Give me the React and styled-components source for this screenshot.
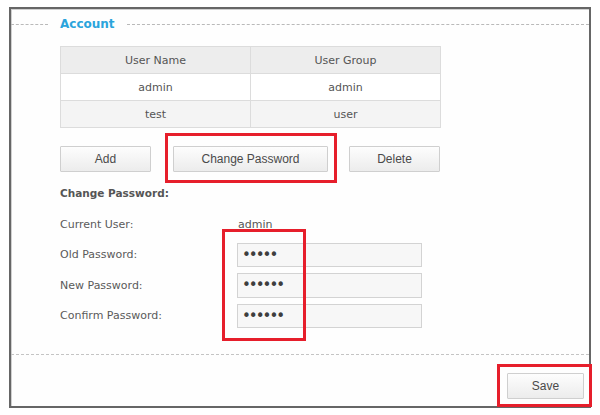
import React from "react";
import styled, { createGlobalStyle } from "styled-components";

const GlobalStyle = createGlobalStyle`
  html, body {
    margin: 0;
    padding: 0;
    background: #ffffff;
  }
  body {
    font-family: "DejaVu Sans", Verdana, sans-serif;
    color: #555555;
  }
`;

const Frame = styled.div`
  position: relative;
  box-sizing: border-box;
  width: 582px;
  height: 401px;
  margin: 7px 0 0 9px;
  border: 2px solid #666666;
  box-shadow: inset 1px 1px 0 #d0d0d0;
  background: #fefefe;
  display: flex;
  flex-direction: column;
`;

const Legend = styled.div`
  display: flex;
  align-items: center;
  height: 30px;
`;

const DashLine = styled.div`
  height: 0;
  border-top: 1px dashed #b9b9b9;
  width: ${(p) => (p.width ? p.width + "px" : "auto")};
  flex: ${(p) => (p.width ? "none" : "1")};
`;

const Title = styled.div`
  font-size: 12px;
  font-weight: bold;
  color: #2aa4dc;
  margin: 0 12px;
`;

const Table = styled.table`
  border-collapse: collapse;
  width: 381px;
  margin: 7px 0 0 49px;
  font-size: 11px;
  color: #555555;
`;

const Cell = styled.td`
  height: 26px;
  padding: 0;
  text-align: center;
  border: 1px solid #dcdcdc;
  width: 50%;
`;

const Row = styled.tr`
  background: ${(p) => p.bg};
`;

const ButtonRow = styled.div`
  display: flex;
  margin: 18px 0 0 49px;
`;

const Button = styled.button`
  box-sizing: border-box;
  width: ${(p) => p.w}px;
  height: 26px;
  margin-right: ${(p) => p.gap || 0}px;
  padding: 0;
  border: 1px solid #cfcfcf;
  border-radius: 1px;
  background: linear-gradient(#fdfdfd, #ececec);
  font-family: "Liberation Sans", Arial, sans-serif;
  font-size: 12px;
  color: #4a4a4a;
  cursor: pointer;
`;

const Heading = styled.div`
  font-size: 10.5px;
  font-weight: bold;
  color: #555555;
  margin: 14px 0 0 49px;
  line-height: 14px;
`;

const Form = styled.div`
  display: grid;
  grid-template-columns: 177px 185px;
  grid-auto-rows: 24.5px;
  row-gap: 6px;
  margin: 12px 0 0 49px;
  align-items: center;
`;

const Label = styled.div`
  font-size: 11px;
  color: #5a5a5a;
`;

const Value = styled.div`
  font-size: 11px;
  color: #555555;
  padding-left: 1px;
`;

const Input = styled.input`
  box-sizing: border-box;
  width: 185px;
  height: 24.5px;
  border: 1px solid #d3d3d3;
  background: #f7f7f7;
  padding: 0 4px;
  font-family: "DejaVu Sans", Verdana, sans-serif;
  font-size: 15px;
  letter-spacing: -2px;
  color: #3e3e3e;
  outline: none;
`;

const Footer = styled.div`
  margin-top: auto;
  border-top: 1px dashed #c4c4c4;
  display: flex;
  justify-content: flex-end;
  padding: 18px 5px 7px 0;
`;

const Mark = styled.div`
  position: absolute;
  box-sizing: border-box;
  left: ${(p) => p.x}px;
  top: ${(p) => p.y}px;
  width: ${(p) => p.w}px;
  height: ${(p) => p.h}px;
  border: 3px solid #e61e2b;
  pointer-events: none;
`;

const users = [
  { name: "admin", group: "admin" },
  { name: "test", group: "user" },
];

const App = () => {
  return (
    <>
      <GlobalStyle />
      <Frame>
        <Legend>
          <DashLine width={37} />
          <Title>Account</Title>
          <DashLine />
        </Legend>

        <Table>
          <tbody>
            <Row bg="#ededed">
              <Cell>User Name</Cell>
              <Cell>User Group</Cell>
            </Row>
            {users.map((u, i) => (
              <Row key={u.name} bg={i % 2 ? "#f4f4f4" : "#ffffff"}>
                <Cell>{u.name}</Cell>
                <Cell>{u.group}</Cell>
              </Row>
            ))}
          </tbody>
        </Table>

        <ButtonRow>
          <Button w={91} gap={22}>Add</Button>
          <Button w={155} gap={21}>Change Password</Button>
          <Button w={91}>Delete</Button>
        </ButtonRow>

        <Heading>Change Password:</Heading>

        <Form>
          <Label>Current User:</Label>
          <Value>admin</Value>
          <Label>Old Password:</Label>
          <Input type="password" defaultValue="12345" readOnly />
          <Label>New Password:</Label>
          <Input type="password" defaultValue="123456" readOnly />
          <Label>Confirm Password:</Label>
          <Input type="password" defaultValue="123456" readOnly />
        </Form>

        <Footer>
          <Button w={77}>Save</Button>
        </Footer>

        <Mark x={154} y={124} w={172} h={50} />
        <Mark x={211} y={220} w={84} h={112} />
        <Mark x={486} y={355} w={95} h={43} />
      </Frame>
    </>
  );
};

export default App;
